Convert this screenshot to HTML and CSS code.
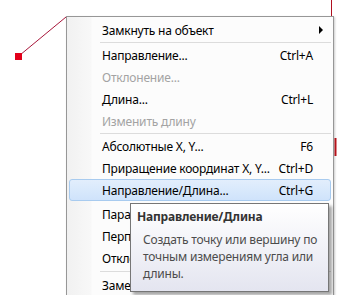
FILE: index.html
```html
<!DOCTYPE html>
<html lang="ru">
<head>
    <meta charset="UTF-8">
    <title>Контекстное меню</title>
    <link rel="stylesheet" href="styles.css">
</head>
<body>
    <!-- drawing behind the menu -->
    <svg class="drawing" width="337" height="295" viewBox="0 0 337 295">
        <line x1="20" y1="55" x2="66" y2="17" stroke="#a8163a" stroke-width="1"/>
        <line x1="331.5" y1="0" x2="331.5" y2="16" stroke="#b01020" stroke-width="1"/>
        <line x1="335.5" y1="138" x2="335.5" y2="156" stroke="#c0141c" stroke-width="2"/>
        <rect x="15" y="53" width="7" height="7" fill="#e2001a"/>
    </svg>

    <div class="menu">
        <div class="item">
            <span class="label">Замкнуть на объект</span>
            <span class="key"></span>
            <span class="sub"><span class="arrow"></span></span>
        </div>
        <div class="sep"></div>
        <div class="item"><span class="label">Направление...</span><span class="key">Ctrl+A</span><span class="sub"></span></div>
        <div class="item disabled"><span class="label">Отклонение...</span><span class="key"></span><span class="sub"></span></div>
        <div class="item"><span class="label">Длина...</span><span class="key">Ctrl+L</span><span class="sub"></span></div>
        <div class="item disabled"><span class="label">Изменить длину</span><span class="key"></span><span class="sub"></span></div>
        <div class="sep"></div>
        <div class="item"><span class="label">Абсолютные X, Y...</span><span class="key">F6</span><span class="sub"></span></div>
        <div class="item"><span class="label">Приращение координат X, Y...</span><span class="key">Ctrl+D</span><span class="sub"></span></div>
        <div class="item active"><span class="label">Направление/Длина...</span><span class="key">Ctrl+G</span><span class="sub"></span></div>
        <div class="item lower"><span class="label">Параллельно...</span><span class="key"></span><span class="sub"></span></div>
        <div class="item"><span class="label">Перпендикуляр...</span><span class="key"></span><span class="sub"></span></div>
        <div class="item"><span class="label">Отклонение...</span><span class="key"></span><span class="sub"></span></div>
        <div class="sep wide"></div>
        <div class="item"><span class="label">Заменить...</span><span class="key"></span><span class="sub"></span></div>
    </div>

    <!-- tooltip for the highlighted item -->
    <div class="tip">
        <div class="tip-title">Направление/Длина</div>
        <div class="tip-text">Создать точку или вершину по точным измерениям угла или длины.</div>
    </div>
</body>
</html>
```

FILE: styles.css
```css
body {
    margin: 0;
    padding: 0;
    width: 337px;
    height: 295px;
    overflow: hidden;
    background: #fff;
    font-family: "Noto Sans", "Open Sans", sans-serif;
    font-size: 12px;
    letter-spacing: -0.2px;
    color: #000;
    position: relative;
}

.drawing {
    position: absolute;
    left: 0;
    top: 0;
}

.menu {
    position: absolute;
    left: 66px;
    top: 16px;
    width: 262px;
    padding: 2px;
    border: 1px solid #979797;
    background: linear-gradient(to right, #f1f1f1 0, #f8f8f8 24px, #fcfcfc 25px, #fcfcfc 100%);
    box-shadow: 1px 1px 2px rgba(0, 0, 0, 0.2);
}

.item {
    display: grid;
    grid-template-columns: 1fr auto 17px;
    align-items: center;
    height: 22px;
    padding-left: 32px;
    box-sizing: border-box;
    border: 1px solid transparent;
    border-radius: 3px;
    white-space: nowrap;
}

.item.lower {
    margin-top: 2px;
}

.item.disabled {
    color: #a3a3a3;
}

.item.active {
    border-color: #a8cbef;
    background: linear-gradient(to bottom, #e2eefc, #cfe3fb);
}

.key {
    text-align: right;
}

.sub {
    display: flex;
    justify-content: flex-end;
    padding-right: 7px;
}

.arrow {
    width: 0;
    height: 0;
    border-top: 4px solid transparent;
    border-bottom: 4px solid transparent;
    border-left: 4px solid #000;
}

.sep {
    height: 3px;
    margin-left: 31px;
    padding-top: 1px;
    box-sizing: border-box;
}

.sep::before {
    content: "";
    display: block;
    border-top: 1px solid #dcdcdc;
}

.sep.wide {
    height: 5px;
    padding-top: 2px;
}

.tip {
    position: absolute;
    left: 130px;
    top: 203px;
    width: 185px;
    padding: 4px 6px 9px 6px;
    border: 1px solid #767676;
    background: linear-gradient(to bottom, #ffffff, #e4e5f0);
    box-shadow: 3px 3px 3px rgba(0, 0, 0, 0.35);
    color: #4c4c4c;
}

.tip-title {
    font-weight: bold;
    color: #333;
    margin-bottom: 6px;
}

.tip-text {
    padding-left: 6px;
    line-height: 17px;
}
```
